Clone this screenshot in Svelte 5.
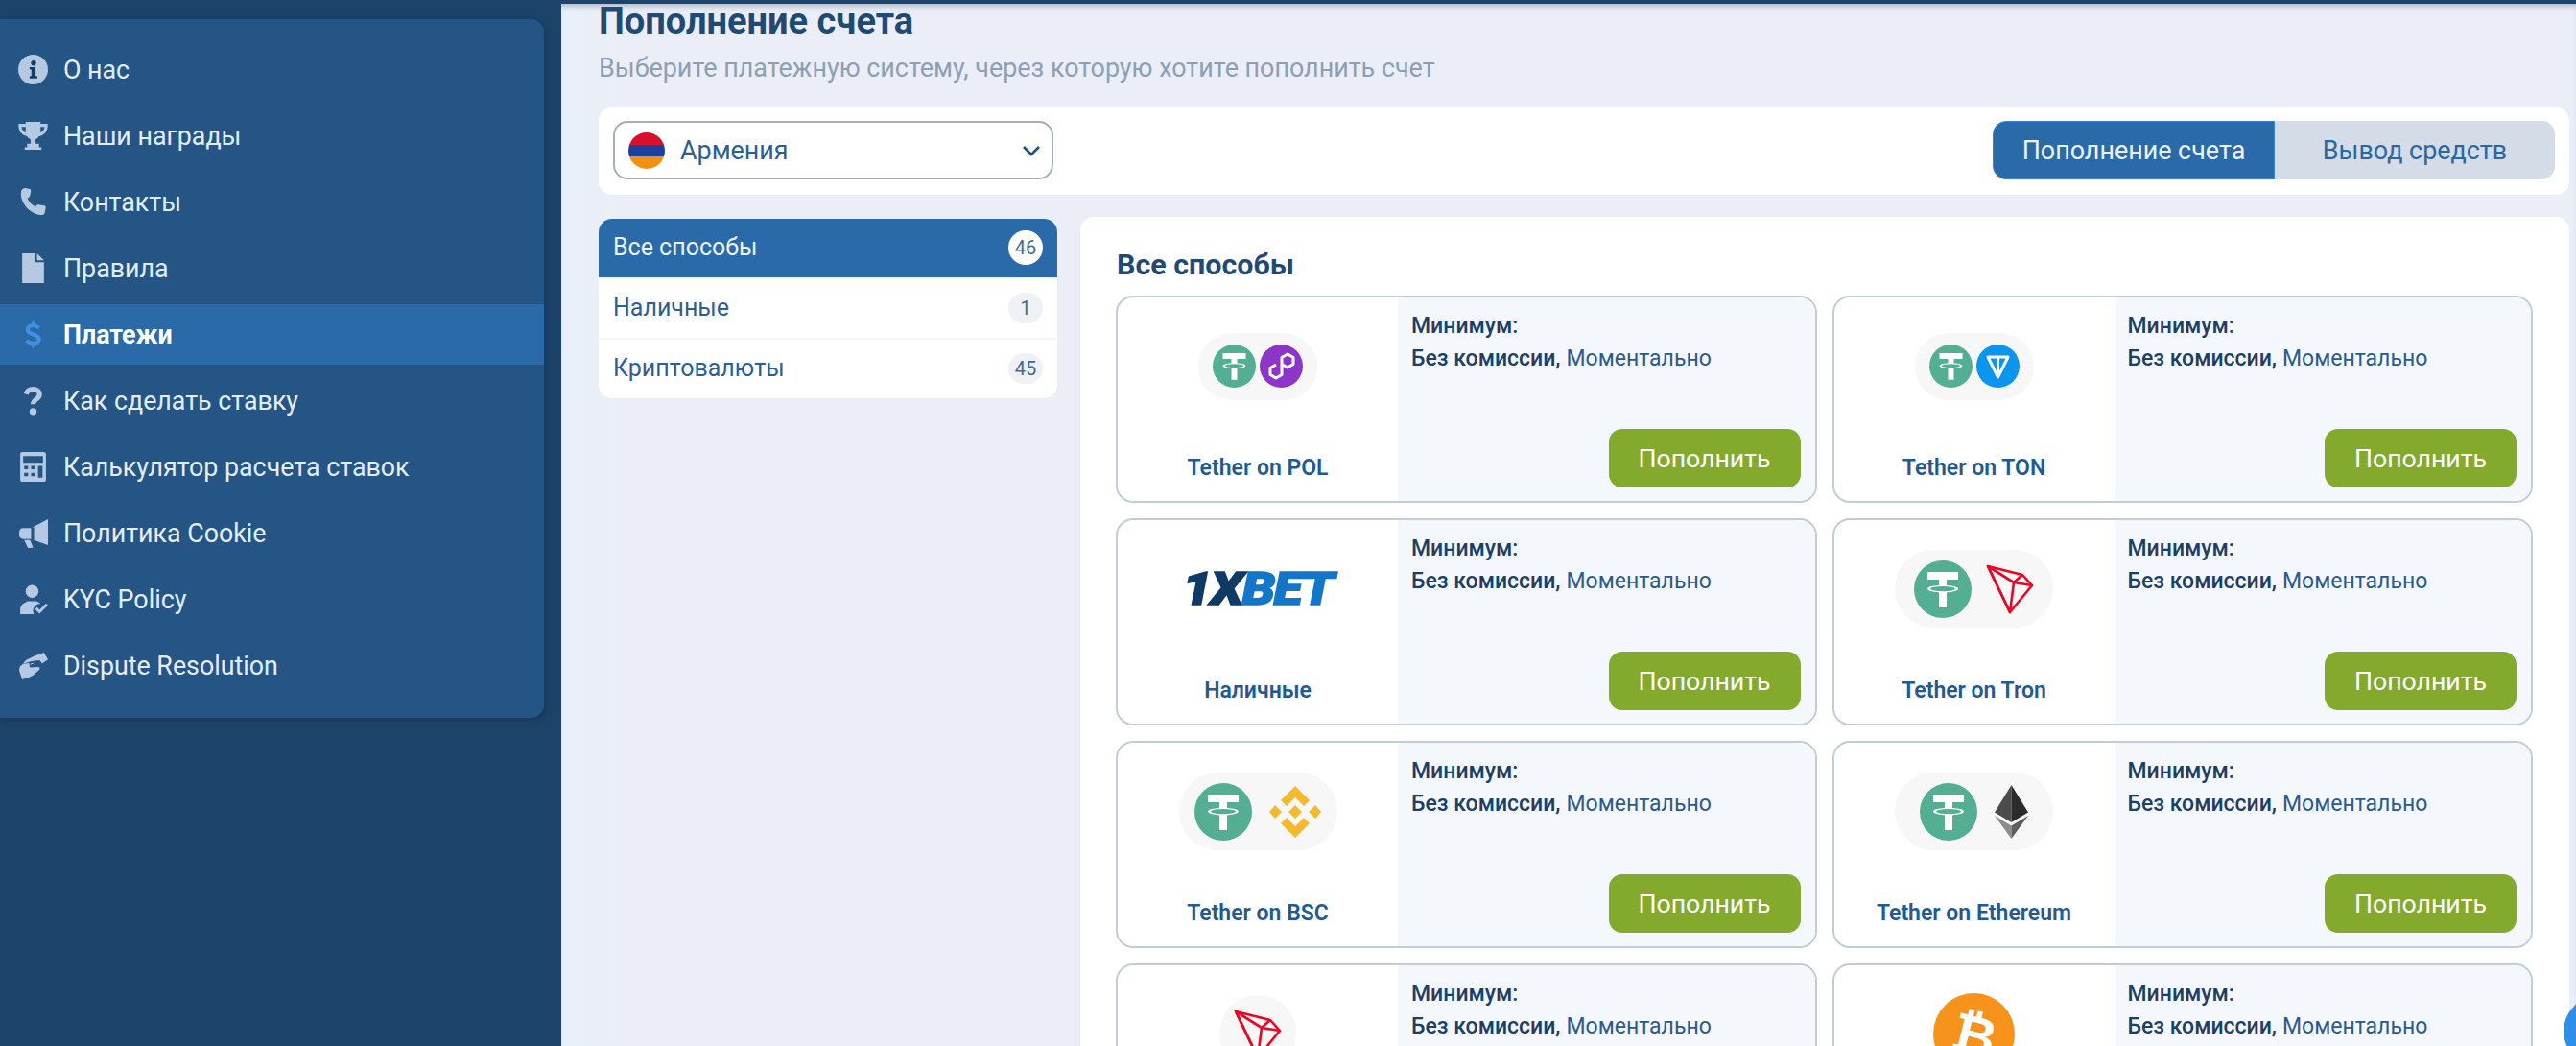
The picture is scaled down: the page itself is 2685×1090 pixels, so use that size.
<script>
  const menu = [
    { id: 'info', label: 'О нас' },
    { id: 'trophy', label: 'Наши награды' },
    { id: 'phone', label: 'Контакты' },
    { id: 'file', label: 'Правила' },
    { id: 'dollar', label: 'Платежи', active: true },
    { id: 'question', label: 'Как сделать ставку' },
    { id: 'calc', label: 'Калькулятор расчета ставок' },
    { id: 'horn', label: 'Политика Cookie' },
    { id: 'kyc', label: 'KYC Policy' },
    { id: 'hands', label: 'Dispute Resolution' }
  ];

  const categories = [
    { label: 'Все способы', count: 46, active: true },
    { label: 'Наличные', count: 1 },
    { label: 'Криптовалюты', count: 45 }
  ];

  // the last row runs off the bottom of the page, only its top part shows
  const methods = [
    { name: 'Tether on POL', logo: 'pol' },
    { name: 'Tether on TON', logo: 'ton' },
    { name: 'Наличные', logo: 'xbet' },
    { name: 'Tether on Tron', logo: 'tron' },
    { name: 'Tether on BSC', logo: 'bsc' },
    { name: 'Tether on Ethereum', logo: 'eth' },
    { logo: 'trx' },
    { logo: 'btc' }
  ];
</script>

{#snippet tether(size)}
  <svg width={size} height={size} viewBox="0 0 60 60">
    <circle cx="30" cy="30" r="30" fill="#53ae94" />
    <path d="M14 12h32v8H34v6c6 .3 12 1.500 12 3.600S40 33 34 33.400V49h-8V33.400c-6-.4-12-1.700-12-3.800S20 26.300 26 26v-6H14z" fill="#fff" />
    <ellipse cx="30" cy="29.600" rx="13" ry="2.600" fill="#53ae94" />
  </svg>
{/snippet}

{#snippet tronMark(w, h)}
  <svg width={w} height={h} viewBox="0 0 50 52" fill="none" stroke="#ec0623" stroke-width="2.600" stroke-linejoin="round">
    <path d="M2 2l36 9 10 11-23 28z" />
    <path d="M2 2l23 48 4-31z" />
    <path d="M29 19l19 3M29 19l9-8M2 2l27 17" />
  </svg>
{/snippet}

{#snippet icon(id)}
  <svg class="ico" class:blue={id === 'dollar'} viewBox="0 0 30 30">
    {#if id === 'info'}
      <circle cx="15" cy="15" r="15" />
      <circle cx="15.500" cy="8.500" r="2.600" fill="#123f60" />
      <path d="M11.500 12.500h6v9h1.800v2.500h-7.800v-2.500h1.800v-6.500h-1.800z" fill="#123f60" />
    {:else if id === 'trophy'}
      <path d="M7.500 1h15v10c0 4-3 7-5 7.500V23h3.500v3.500h2.500V29h-17v-2.500H9V23h3.500v-4.500C10.500 18 7.500 15 7.500 11z" />
      <path d="M8 4.500H1.800c0 5 2.700 8.500 7.700 9.500M22 4.500h6.200c0 5-2.700 8.500-7.700 9.500" fill="none" stroke="#b5c9e2" stroke-width="3" />
    {:else if id === 'phone'}
      <path d="M7.500 1l4 1c1 .3 1.500 1 1.300 2l-1 5.300c-.1.700-.6 1.100-1.300 1.300l-1.300.6c1.700 3.800 4.500 6.800 8.300 8.600l1-1.400c.5-.6 1-.8 1.800-.7l6 1c1 .2 1.700.9 1.500 1.900l-1 5.300c-.3 1.200-1.200 2.100-2.500 2.100C12 28 1 15 3 4c.3-1.900 2.700-3.400 4.500-3z" />
    {:else if id === 'file'}
      <path d="M4 0h13v9h9v21H4z" />
      <path d="M19 0l7 7h-7z" />
    {:else if id === 'dollar'}
      <path d="M21 8.500C19 6.800 17.200 6 15 6c-3.500 0-5.500 1.700-5.500 4.200 0 6 11.500 3.500 11.500 9.600 0 2.500-2.300 4.200-6 4.200-2.400 0-4.800-1-6.500-2.800" fill="none" stroke="#3f8fe2" stroke-width="4" />
      <path d="M15 0l2.500 6h-5zM15 30l2.500-6h-5z" />
    {:else if id === 'question'}
      <path d="M8 8.500C9 5 11.500 3.500 15 3.500c3.700 0 6.500 2 6.500 5.200 0 5-6.500 4.800-6.500 10" fill="none" stroke="#b5c9e2" stroke-width="5" />
      <circle cx="15" cy="26" r="3.600" />
    {:else if id === 'calc'}
      <path fill-rule="evenodd" d="M4 0h22c1 0 2 1 2 2v26c0 1-1 2-2 2H4c-1 0-2-1-2-2V2c0-1 1-2 2-2zM5 4v7h20V4zM6 14v3.500h4V14zM13 14v3.500h4V14zM20 14v12h4.500V14zM6 21v3.500h4V21zM13 21v3.500h4V21z" />
    {:else if id === 'horn'}
      <path d="M30 1v26L13 21H5c-2 0-4-1.500-4-4v-3c0-2.500 2-4 4-4h8z" />
      <path d="M6 22h6l3 7.500-5 1z" />
      <rect x="13" y="9" width="3" height="13" fill="#245585" />
    {:else if id === 'kyc'}
      <circle cx="14" cy="7" r="6.500" />
      <path d="M2 30v-5c0-5 5-6.500 7.500-8h9c1.500.8 3 1.500 4 2.400-4.500.2-7.500 3.600-7.500 7 0 1.200.3 2.600 1 3.600z" />
      <path d="M18 24l3.500 3.500L29 20" fill="none" stroke="#b5c9e2" stroke-width="2.800" />
    {:else if id === 'hands'}
      <path d="M30 9l-4-7-9 3-6 3c-3 1-5 3-6 5l8-2 5-1h4l2 3 6-4z" />
      <path d="M1 20c0-4 2-6 5-7l11-1-5 2.500c-1 1-1 2.500.5 2.500l6.500-.5c3-.2 3.500 1.500 2 3L15 25c-3 1.500-5 2.500-8 3l-3 1z" />
      <path d="M21 11.500h-6.500c-2 0-3 1.200-2.500 3" fill="none" stroke="#245585" stroke-width="1.400" />
    {/if}
  </svg>
{/snippet}

{#snippet logo(kind)}
  {#if kind === 'pol'}
    <div class="tile small">
      {@render tether(45)}
      <svg width="45" height="45" viewBox="0 0 45 45">
        <circle cx="22.500" cy="22.500" r="22.500" fill="#8e35c9" />
        <path d="M17 21l-6 3.500v7l6 3.500 6-3.500v-18l6-3.500 6 3.500v7L29 24l-6-3.500" fill="none" stroke="#fff" stroke-width="3" stroke-linejoin="round" />
      </svg>
    </div>
  {:else if kind === 'ton'}
    <div class="tile small">
      {@render tether(45)}
      <svg width="45" height="45" viewBox="0 0 45 45">
        <circle cx="22.500" cy="22.500" r="22.500" fill="#0b95ec" />
        <path d="M12 13h21L22.500 34zM22.500 13v21" fill="none" stroke="#fff" stroke-width="3" stroke-linejoin="round" />
      </svg>
    </div>
  {:else if kind === 'xbet'}
    <div class="xbet"><span>1X</span><b>BET</b></div>
  {:else if kind === 'tron'}
    <div class="tile large tight">
      {@render tether(60)}
      {@render tronMark(50, 52)}
    </div>
  {:else if kind === 'bsc'}
    <div class="tile large">
      {@render tether(60)}
      <svg width="54" height="54" viewBox="0 0 54 54" fill="#f3ba2f">
        <path d="M27 0l15 15-6 6-9-9-9 9-6-6zM27 54L12 39l6-6 9 9 9-9 6 6z" />
        <path d="M27 20l7 7-7 7-7-7zM6 20l7 7-7 7-6-7zM48 20l6 7-6 7-7-7z" />
      </svg>
    </div>
  {:else if kind === 'eth'}
    <div class="tile large">
      {@render tether(60)}
      <svg width="35" height="56" viewBox="0 0 35 56">
        <path d="M17.500 0L0 28.500 17.500 39z" fill="#4b4b4b" />
        <path d="M17.500 0L35 28.500 17.500 39z" fill="#2b2b2b" />
        <path d="M0 32l17.500 24V42.500z" fill="#8c8c8c" />
        <path d="M35 32L17.500 56V42.500z" fill="#5e5e5e" />
      </svg>
    </div>
  {:else if kind === 'trx'}
    <div class="tile single">{@render tronMark(50, 52)}</div>
  {:else if kind === 'btc'}
    <svg width="85" height="85" viewBox="0 0 85 85">
      <circle cx="42.500" cy="42.500" r="42.500" fill="#f7931a" />
      <text x="43" y="63" text-anchor="middle" transform="rotate(14 42.500 42.500)" font-family="Roboto, sans-serif" font-weight="700" font-size="56" fill="#fff">₿</text>
    </svg>
  {/if}
{/snippet}

<div class="page">
  <aside class="side">
    <nav class="menu">
      {#each menu as item}
        <div class="menu-row" class:active={item.active}>
          <span class="ico-box">{@render icon(item.id)}</span>
          <span>{item.label}</span>
        </div>
      {/each}
    </nav>
  </aside>

  <main class="main">
    <h1>Пополнение счета</h1>
    <p class="sub">Выберите платежную систему, через которую хотите пополнить счет</p>

    <div class="bar">
      <div class="select">
        <span class="flag"></span>
        <span class="select-label">Армения</span>
        <svg class="chev" width="20" height="12" viewBox="0 0 20 12" fill="none" stroke="#1c4f80" stroke-width="2.600"><path d="M2 2l8 8 8-8" /></svg>
      </div>
      <div class="tabs">
        <div class="tab on">Пополнение счета</div>
        <div class="tab">Вывод средств</div>
      </div>
    </div>

    <div class="body">
      <div class="cats">
        {#each categories as cat}
          <div class="cat" class:on={cat.active}>
            <span>{cat.label}</span>
            <span class="badge">{cat.count}</span>
          </div>
        {/each}
      </div>

      <section class="panel">
        <h2>Все способы</h2>
        <div class="grid">
          {#each methods as m}
            <article class="card">
              <div class="card-left">
                <div class="logo-area">{@render logo(m.logo)}</div>
                {#if m.name}
                  <div class="card-name">{m.name}</div>
                {/if}
              </div>
              <div class="card-right">
                <div class="min">Минимум:</div>
                <div class="terms"><b>Без комиссии,</b> Моментально</div>
                {#if m.name}
                  <button class="pay">Пополнить</button>
                {/if}
              </div>
            </article>
          {/each}
        </div>
      </section>
    </div>
  </main>

  <div class="chat"></div>
</div>

<style>
  :global(body) {
    margin: 0;
    font-family: Roboto, "Noto Sans", sans-serif;
  }

  .page {
    display: grid;
    grid-template-columns: 585px 1fr;
    height: 1090px;
    overflow: hidden;
    position: relative;
    background: #e9eef5;
  }

  .side {
    background: #1c4369;
    padding-top: 20px;
  }

  .menu {
    width: 567px;
    box-sizing: border-box;
    padding: 21px 0 23px;
    display: flex;
    flex-direction: column;
    gap: 6px;
    background: #245585;
    border-radius: 0 14px 14px 0;
    box-shadow: 2px 3px 6px rgba(10, 30, 55, 0.25);
  }

  .menu-row {
    height: 63px;
    display: flex;
    align-items: center;
    gap: 16px;
    padding-left: 19px;
    font-size: 26.800px;
    color: #e3eefa;
  }

  .menu-row.active {
    background: #2a6aa8;
    color: #fff;
    font-weight: 700;
  }

  .ico-box {
    width: 31px;
    display: flex;
    justify-content: center;
  }

  .ico {
    width: 31px;
    height: 31px;
    fill: #b5c9e2;
  }

  .ico.blue {
    fill: #3f8fe2;
  }

  .main {
    min-width: 0;
    box-sizing: border-box;
    padding: 0 7px 0 39px;
    border-top: 4px solid #1c4369;
    background:
      linear-gradient(transparent calc(100% - 16px), #e2e5ed),
      linear-gradient(90deg, #e7f0f9 0, #ebeef6 60px);
    box-shadow: inset 0 6px 6px -4px rgba(28, 67, 105, 0.35);
  }

  h1 {
    margin: 0;
    font-size: 38px;
    line-height: 36px;
    font-weight: 700;
    color: #1f4a75;
  }

  .sub {
    margin: 13px 0 0;
    font-size: 26.900px;
    line-height: 36px;
    color: #8ba0b6;
  }

  .bar {
    margin-top: 23px;
    height: 91px;
    box-sizing: border-box;
    padding: 0 15px 2px;
    display: flex;
    align-items: center;
    justify-content: space-between;
    background: #fff;
    border-radius: 14px;
  }

  .select {
    width: 459px;
    height: 61px;
    box-sizing: border-box;
    display: flex;
    align-items: center;
    gap: 16px;
    padding: 0 11px 0 14px;
    border: 2px solid #a4adb9;
    border-radius: 15px;
  }

  .flag {
    width: 38px;
    height: 38px;
    border-radius: 50%;
    background: linear-gradient(#d90f2b 0 33%, #1b3f9c 33% 67%, #f2900f 67%);
  }

  .select-label {
    flex: 1;
    font-size: 26.900px;
    color: #2a5f96;
  }

  .tabs {
    display: flex;
    width: 586px;
    height: 61px;
    font-size: 26.900px;
  }

  .tab {
    flex: 1;
    display: flex;
    align-items: center;
    justify-content: center;
    background: #d3dce7;
    color: #2a66a4;
    border-radius: 0 14px 14px 0;
  }

  .tab.on {
    background: #2a6aa8;
    color: #eaf3fc;
    border: 1px solid #3b82d6;
    border-radius: 14px 0 0 14px;
  }

  .body {
    margin-top: 23px;
    display: grid;
    grid-template-columns: 478px 1fr;
    gap: 24px;
    align-items: start;
  }

  .cats {
    margin-top: 2px;
    background: #fff;
    border-radius: 14px;
    overflow: hidden;
  }

  .cat {
    height: 63px;
    box-sizing: border-box;
    padding: 0 15px 2px;
    display: flex;
    align-items: center;
    justify-content: space-between;
    font-size: 25px;
    color: #2a5f96;
    border-top: 2px solid #f4f6f9;
  }

  .cat.on {
    height: 61px;
    background: #2a6aa8;
    color: #eaf3fc;
    border-top: 0;
  }

  .badge {
    min-width: 36px;
    height: 32px;
    display: flex;
    align-items: center;
    justify-content: center;
    border-radius: 16px;
    background: #eef2f7;
    font-size: 20px;
    color: #46688f;
  }

  .cat.on .badge {
    height: 36px;
    border-radius: 18px;
    background: #fff;
  }

  .panel {
    box-sizing: border-box;
    padding: 33px 38px 0 37px;
    background: #fff;
    border-radius: 14px 14px 0 0;
    min-height: 870px;
  }

  h2 {
    margin: 0;
    padding-left: 1px;
    font-size: 30.400px;
    line-height: 34px;
    font-weight: 700;
    color: #1f4a75;
  }

  .grid {
    margin-top: 15px;
    display: grid;
    grid-template-columns: 1fr 1fr;
    gap: 16px;
  }

  .card {
    height: 216px;
    box-sizing: border-box;
    display: grid;
    grid-template-columns: 292px 1fr;
    border: 2px solid #c3cbd6;
    border-radius: 18px;
    overflow: hidden;
  }

  .card-left {
    display: flex;
    flex-direction: column;
    align-items: center;
  }

  .logo-area {
    height: 143px;
    display: flex;
    align-items: center;
    justify-content: center;
  }

  .card-name {
    height: 68px;
    display: flex;
    align-items: center;
    font-size: 23px;
    font-weight: 600;
    color: #23598f;
  }

  .card-right {
    box-sizing: border-box;
    padding: 12px 15px 14px 14px;
    display: flex;
    flex-direction: column;
    background: #f4f8fd;
  }

  .min,
  .terms {
    height: 34px;
    display: flex;
    align-items: center;
    gap: 6px;
    font-size: 23px;
    color: #2a5a8f;
  }

  .min,
  .terms b {
    font-weight: 500;
    color: #1d3f66;
  }

  .pay {
    margin-top: auto;
    align-self: flex-end;
    width: 200px;
    height: 61px;
    border: 0;
    border-radius: 14px;
    background: #83aa2d;
    color: #fff;
    font: 400 26.700px Roboto, sans-serif;
  }

  .tile {
    display: flex;
    align-items: center;
    justify-content: center;
    background: #f7f7f7;
  }

  .tile.small {
    width: 124px;
    height: 70px;
    gap: 4px;
    border-radius: 35px;
  }

  .tile.large {
    width: 165px;
    height: 81px;
    gap: 18px;
    border-radius: 40px;
  }

  .tile.tight {
    gap: 15px;
  }

  .tile.single {
    width: 80px;
    height: 81px;
    border-radius: 40px;
  }

  .xbet {
    font: italic 900 48px/1 Roboto, sans-serif;
    letter-spacing: -1.500px;
    color: #0f3a66;
    -webkit-text-stroke: 1.500px currentColor;
    transform: scaleX(1.160);
  }

  .xbet b {
    font-weight: 900;
    color: #1476c8;
  }

  .chat {
    position: absolute;
    left: 2672px;
    top: 1038px;
    width: 73px;
    height: 73px;
    border-radius: 50%;
    background: #2f8fe8;
  }
</style>
